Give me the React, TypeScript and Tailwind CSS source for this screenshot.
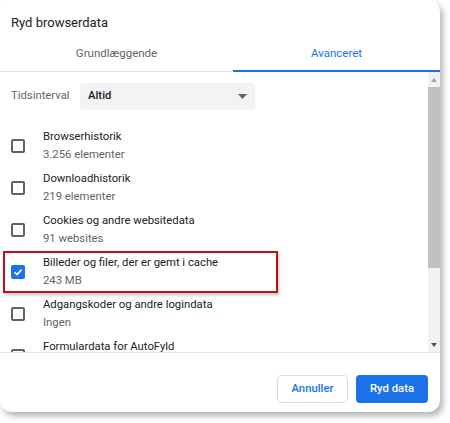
import React from "react";

const items = [
  { title: "Browserhistorik", sub: "3.256 elementer", checked: false },
  { title: "Downloadhistorik", sub: "219 elementer", checked: false },
  { title: "Cookies og andre websitedata", sub: "91 websites", checked: false },
  { title: "Billeder og filer, der er gemt i cache", sub: "243 MB", checked: true, marked: true },
  { title: "Adgangskoder og andre logindata", sub: "Ingen", checked: false },
  { title: "Formulardata for AutoFyld", sub: "", checked: false },
];

function Checkbox({ checked }: { checked: boolean }) {
  if (checked) {
    return (
      <div className="w-[14px] h-[14px] rounded-[2px] bg-[#1a73e8] flex items-center justify-center shrink-0">
        <svg width="10" height="10" viewBox="0 0 10 10">
          <path d="M1.5 5.2 L4 7.6 L8.6 2.6" fill="none" stroke="white" strokeWidth="1.6" />
        </svg>
      </div>
    );
  }
  return <div className="w-[14px] h-[14px] rounded-[2px] border-2 border-[#5f6368] shrink-0" />;
}

export default function App() {
  return (
    <div className="w-[450px] h-[423px] bg-white" style={{ fontFamily: "Roboto, 'Noto Sans', sans-serif" }}>
      <div className="w-[440px] h-[412px] bg-white rounded-[12px] shadow-[3px_4px_6px_rgba(0,0,0,0.3)] flex flex-col overflow-hidden">
        {/* Header */}
        <div className="h-[37px] px-[11px] pt-[14px] text-[13px] leading-[18px] text-[#202124]">Ryd browserdata</div>
        <div className="flex h-[35px] text-[11.5px]">
          <div className="w-[233px] flex items-center justify-center text-[#5f6368] border-b border-[#e3e3e3]">
            Grundlæggende
          </div>
          <div className="flex-1 flex items-center justify-center text-[#1a73e8] border-b-2 border-[#1a73e8]">
            Avanceret
          </div>
        </div>

        {/* Scroll area */}
        <div className="h-[281px] flex border-b border-[#e6e6e6]">
          <div className="flex-1 overflow-hidden">
            <div className="flex items-center pl-[11px] pt-[11px]">
              <span className="text-[11.3px] text-[#5f6368] w-[69px]">Tidsinterval</span>
              <div className="w-[175px] h-[27px] rounded-[4px] bg-[#f1f3f4] flex items-center justify-between pl-[8px] pr-[8px]">
                <span className="text-[11.3px] text-[#202124] font-medium">Altid</span>
                <svg width="9" height="5" viewBox="0 0 9 5">
                  <path d="M0 0 L9 0 L4.5 5 Z" fill="#5f6368" />
                </svg>
              </div>
            </div>
            <div className="mt-[15px]">
              {items.map((it) => (
                <div key={it.title} className="relative h-[42px] flex items-center pl-[11px]">
                  <Checkbox checked={it.checked} />
                  <div className="pl-[18px] text-[11.3px]">
                    <div className="leading-[18px] text-[#202124]">{it.title}</div>
                    <div className="leading-[18px] text-[#5f6368] h-[18px]">{it.sub}</div>
                  </div>
                  {it.marked && (
                    <div className="absolute left-[3px] top-0 w-[275px] h-[42px] border-2 border-[#b5121b] shadow-[1px_2px_3px_rgba(0,0,0,0.25)] pointer-events-none" />
                  )}
                </div>
              ))}
            </div>
          </div>
          {/* Scrollbar */}
          <div className="w-[12px] flex flex-col bg-[#f1f1f1]">
            <div className="h-[15px] flex items-center justify-center">
              <svg width="6" height="4" viewBox="0 0 6 4">
                <path d="M0 4 L6 4 L3 0 Z" fill="#a3a3a3" />
              </svg>
            </div>
            <div className="h-[181px] bg-[#c1c1c1]" />
            <div className="flex-1" />
            <div className="h-[15px] flex items-center justify-center">
              <svg width="6" height="4" viewBox="0 0 6 4">
                <path d="M0 0 L6 0 L3 4 Z" fill="#505050" />
              </svg>
            </div>
          </div>
        </div>

        {/* Footer */}
        <div className="flex-1 flex justify-end items-start pt-[22px] pr-[12px] gap-[8px]">
          <button className="w-[71px] h-[28px] rounded-[4px] border border-[#dadce0] bg-white text-[11.3px] font-medium text-[#1a73e8]">
            Annuller
          </button>
          <button className="w-[72px] h-[28px] rounded-[4px] bg-[#1a73e8] text-[11.3px] font-medium text-white">
            Ryd data
          </button>
        </div>
      </div>
    </div>
  );
}
